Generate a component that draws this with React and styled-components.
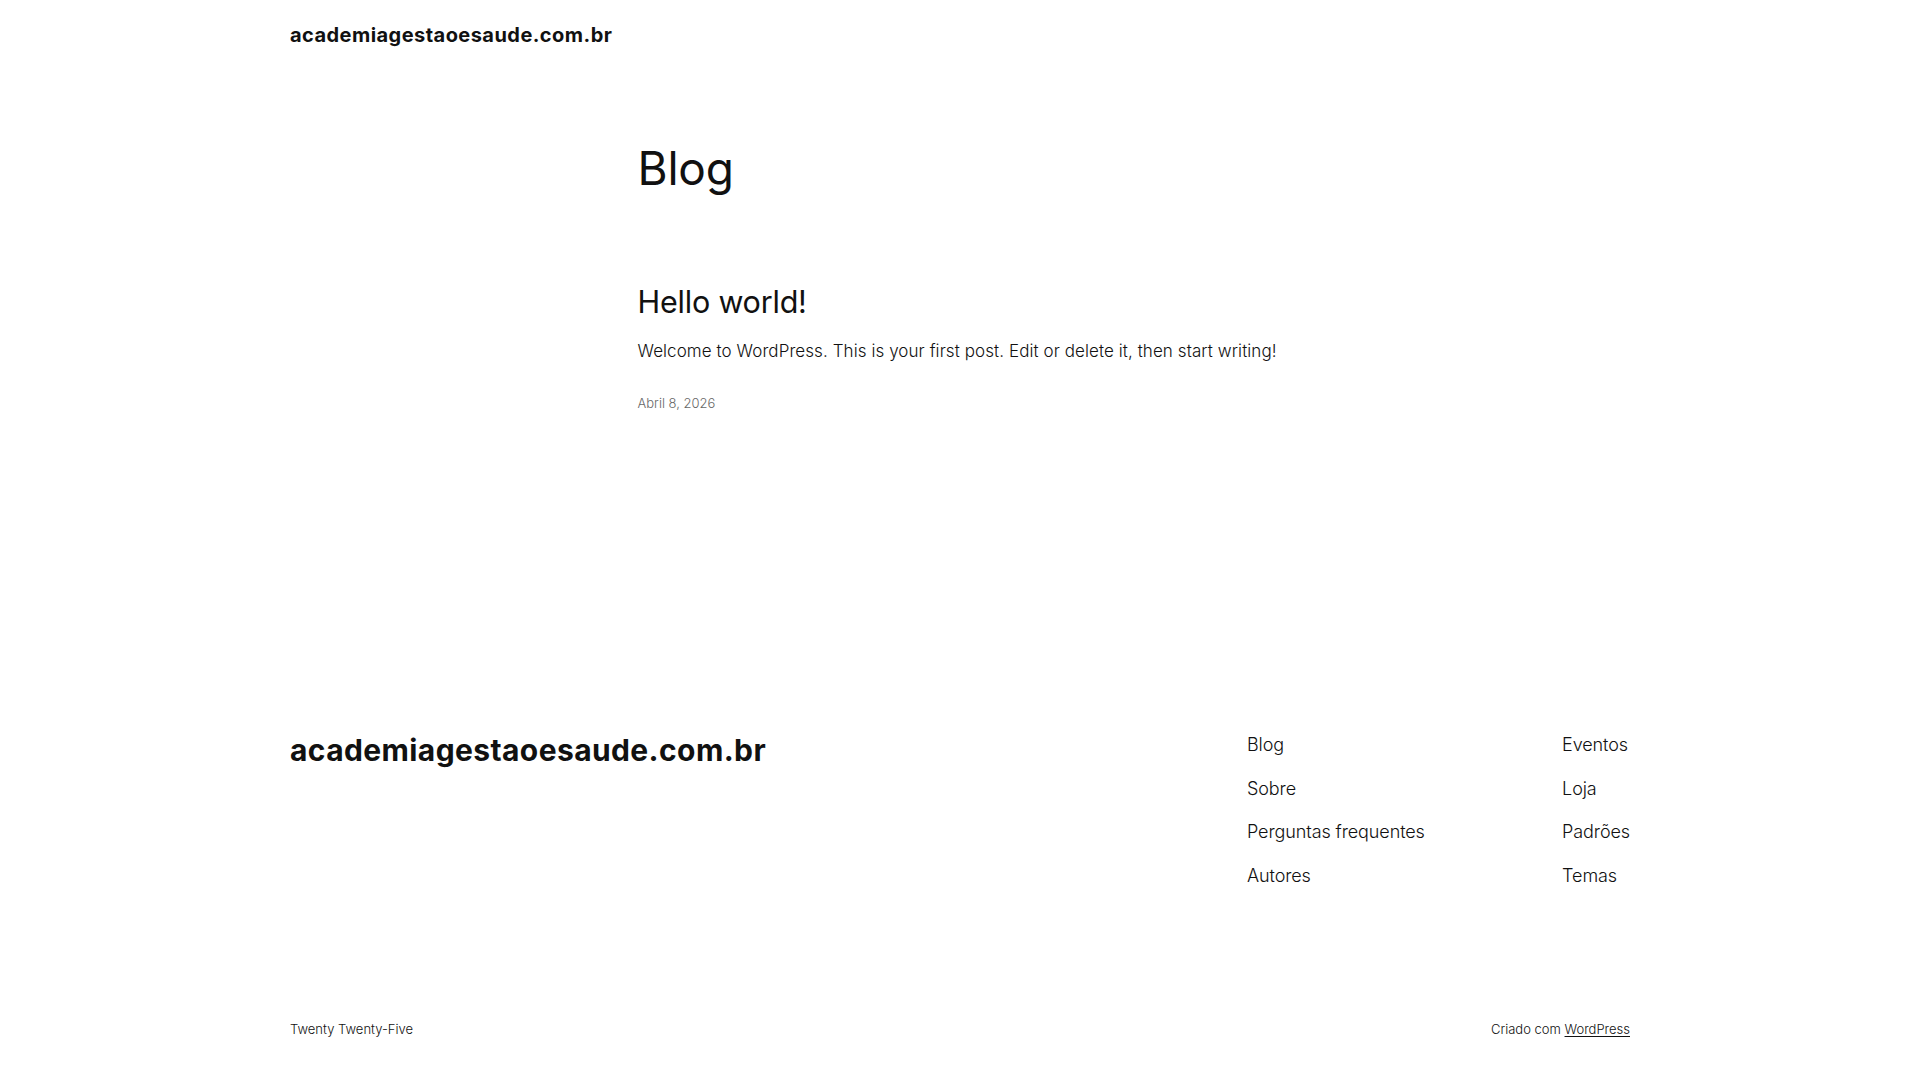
import React from "react";
import styled, { createGlobalStyle } from "styled-components";

const GlobalStyle = createGlobalStyle`
  html, body {
    margin: 0;
    padding: 0;
    background: #ffffff;
  }
  body {
    font-family: Inter, "Noto Sans", sans-serif;
    color: #111111;
    font-weight: 300;
    -webkit-font-smoothing: antialiased;
  }
  a {
    color: inherit;
    text-decoration: none;
  }
`;

const Page = styled.div`
  width: 1920px;
  min-height: 1080px;
  display: flex;
  flex-direction: column;
`;

const Wide = styled.div`
  width: 1340px;
  margin: 0 auto;
`;

const Header = styled.header`
  padding: 21px 0 27px;
`;

const SiteTitle = styled.a`
  display: block;
  font-size: ${(p) => p.$size}px;
  line-height: ${(p) => p.$line}px;
  font-weight: 700;
  letter-spacing: ${(p) => p.$spacing || 0}px;
  color: #111111;
`;

const Main = styled.main`
  width: 645px;
  margin: 0 auto;
  padding: 64.7px 0 317px;
`;

const PageTitle = styled.h1`
  margin: 0;
  font-size: 46px;
  line-height: 55.2px;
  font-weight: 400;
  letter-spacing: -0.2px;
`;

const Post = styled.article`
  margin-top: 88.2px;
`;

const PostTitle = styled.h2`
  margin: 0;
  font-size: 30.5px;
  line-height: 36.6px;
  font-weight: 400;
  letter-spacing: -0.2px;
`;

const Excerpt = styled.p`
  margin: 16px 0 0;
  font-size: 17px;
  line-height: 28.8px;
  font-weight: 300;
  letter-spacing: 0.08px;
`;

const PostDate = styled.time`
  display: block;
  margin-top: 29px;
  font-size: 13px;
  line-height: 19.6px;
  color: #686868;
  font-weight: 300;
`;

const Footer = styled.footer`
  padding-bottom: 40px;
`;

const FooterTop = styled.div`
  display: flex;
  justify-content: space-between;
  align-items: flex-start;
`;

const FooterBrand = styled.div`
  padding-top: 0.5px;
`;

const NavGroup = styled.div`
  width: 383px;
  display: flex;
  justify-content: space-between;
`;

const NavColumn = styled.nav`
  display: flex;
  flex-direction: column;
  gap: 15.7px;
`;

const NavLink = styled.a`
  font-size: 18px;
  line-height: 28px;
  font-weight: 300;
  letter-spacing: -0.1px;
`;

const FooterBottom = styled.div`
  margin-top: 129.8px;
  display: flex;
  justify-content: space-between;
  font-size: 13px;
  line-height: 19.6px;
  font-weight: 300;
`;

const Underlined = styled.a`
  text-decoration: underline;
  text-underline-offset: 2px;
`;

const leftLinks = ["Blog", "Sobre", "Perguntas frequentes", "Autores"];
const rightLinks = ["Eventos", "Loja", "Padrões", "Temas"];

export default function App() {
  return (
    <Page>
      <GlobalStyle />
      <Header>
        <Wide>
          <SiteTitle href="#" $size={20} $line={28} $spacing={0.45}>
            academiagestaoesaude.com.br
          </SiteTitle>
        </Wide>
      </Header>
      <Main>
        <PageTitle>Blog</PageTitle>
        <Post>
          <PostTitle>Hello world!</PostTitle>
          <Excerpt>
            Welcome to WordPress. This is your first post. Edit or delete it, then start writing!
          </Excerpt>
          <PostDate>Abril 8, 2026</PostDate>
        </Post>
      </Main>
      <Footer>
        <Wide>
          <FooterTop>
            <FooterBrand>
              <SiteTitle href="#" $size={30} $line={36} $spacing={0.4}>
                academiagestaoesaude.com.br
              </SiteTitle>
            </FooterBrand>
            <NavGroup>
              <NavColumn>
                {leftLinks.map((l) => (
                  <NavLink key={l} href="#">{l}</NavLink>
                ))}
              </NavColumn>
              <NavColumn>
                {rightLinks.map((l) => (
                  <NavLink key={l} href="#">{l}</NavLink>
                ))}
              </NavColumn>
            </NavGroup>
          </FooterTop>
          <FooterBottom>
            <span>Twenty Twenty-Five</span>
            <span>
              Criado com <Underlined href="#">WordPress</Underlined>
            </span>
          </FooterBottom>
        </Wide>
      </Footer>
    </Page>
  );
}
